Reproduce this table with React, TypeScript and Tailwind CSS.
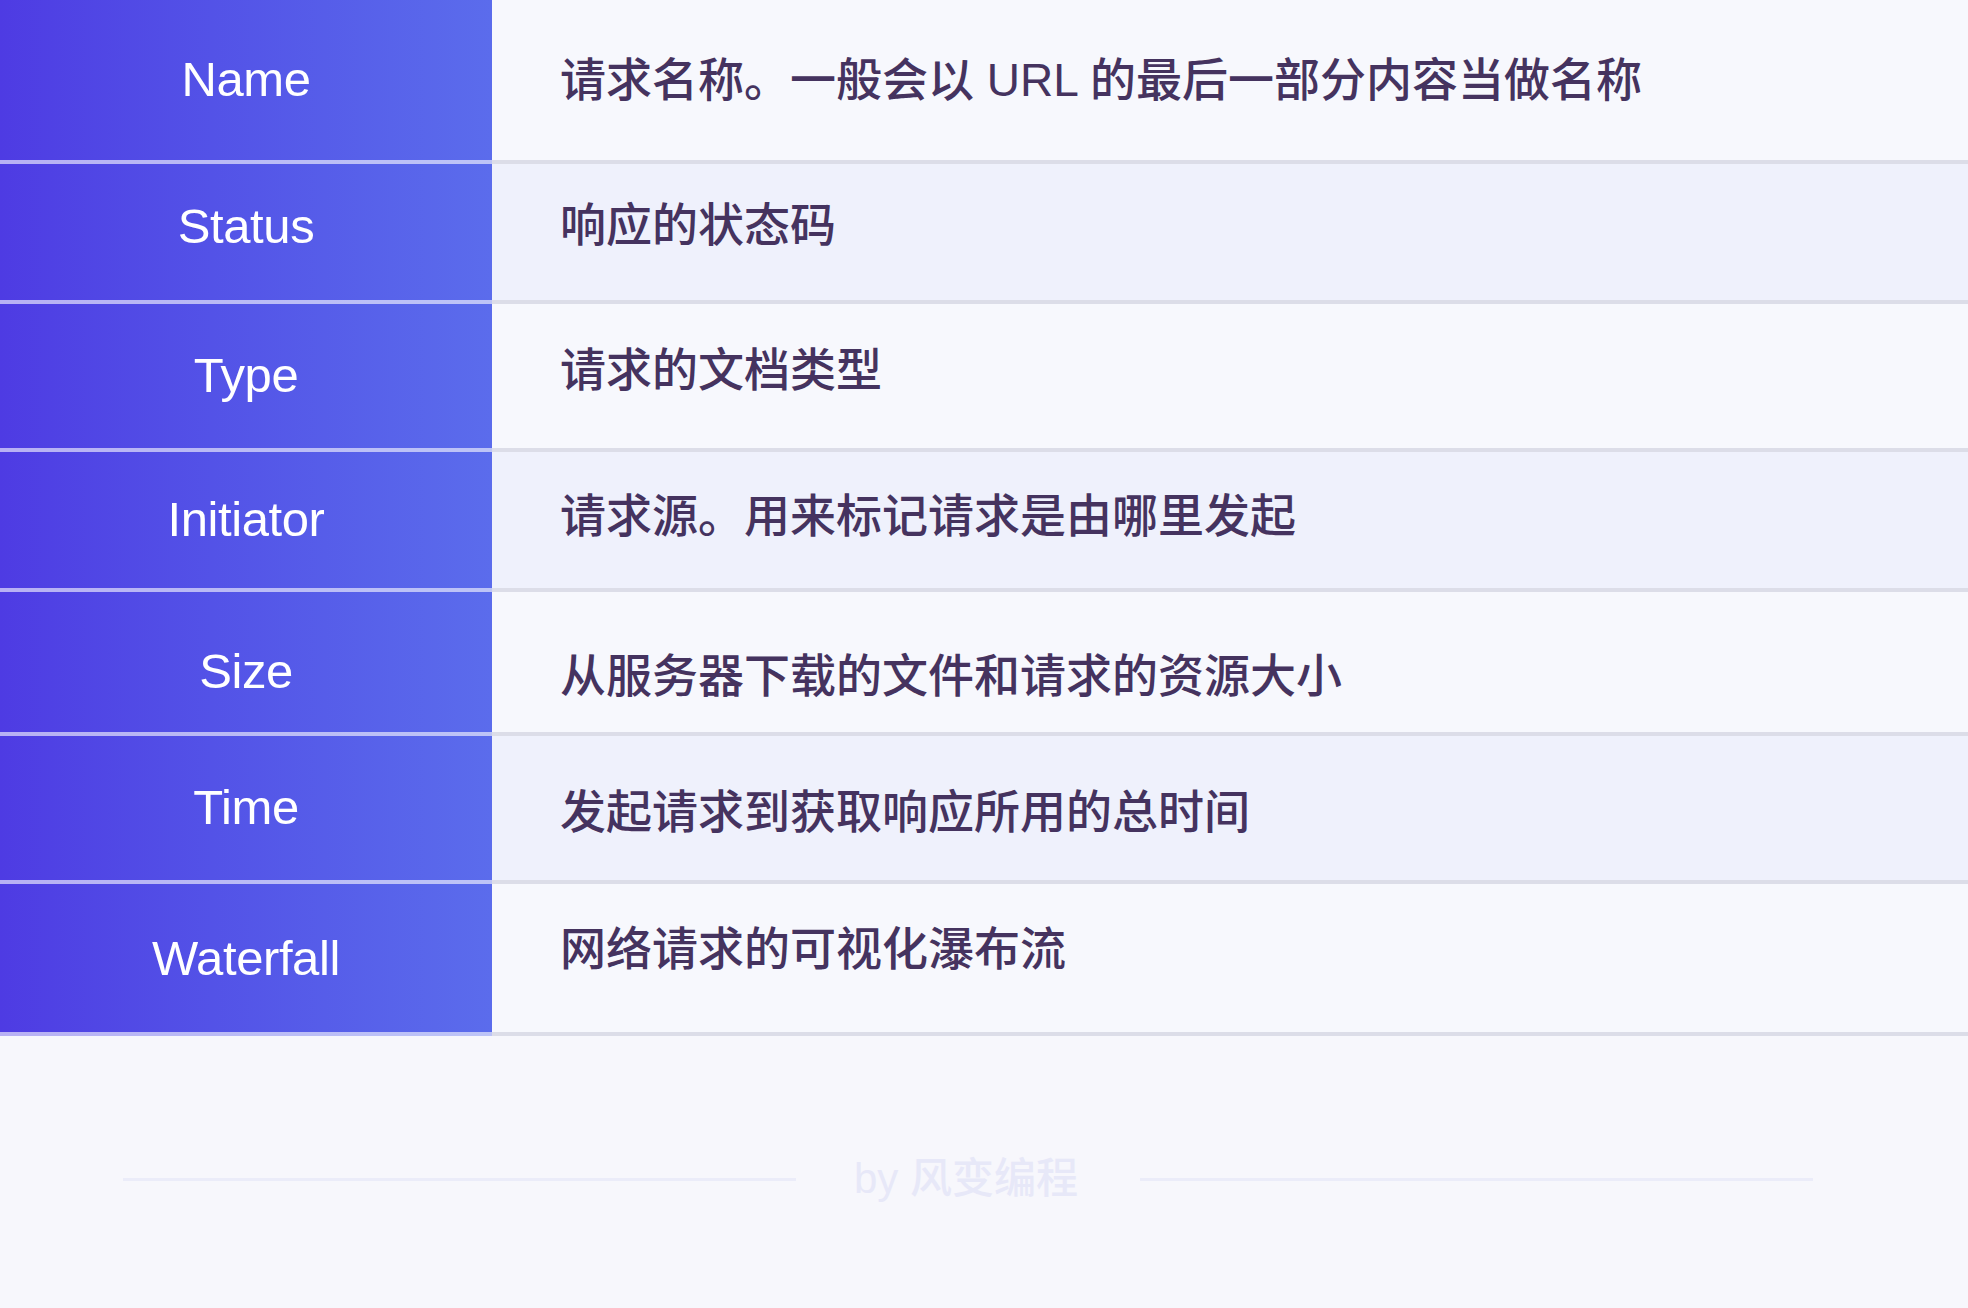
import React from "react";

type Row = { label: string; desc: string; h: string; alt: boolean; lp: string; dp: string };

const rows: Row[] = [
  { label: "Name", desc: "请求名称。一般会以 URL 的最后一部分内容当做名称", h: "h-[164px]", alt: false, lp: "pb-[2px]", dp: "" },
  { label: "Status", desc: "响应的状态码", h: "h-[140px]", alt: true, lp: "pb-[12px]", dp: "pb-[15px]" },
  { label: "Type", desc: "请求的文档类型", h: "h-[148px]", alt: false, lp: "pb-[2px]", dp: "pb-[12px]" },
  { label: "Initiator", desc: "请求源。用来标记请求是由哪里发起", h: "h-[140px]", alt: true, lp: "pb-[2px]", dp: "pb-[8px]" },
  { label: "Size", desc: "从服务器下载的文件和请求的资源大小", h: "h-[144px]", alt: false, lp: "pt-[18px]", dp: "pt-[27px]" },
  { label: "Time", desc: "发起请求到获取响应所用的总时间", h: "h-[148px]", alt: true, lp: "pb-[2px]", dp: "pt-[8px]" },
  { label: "Waterfall", desc: "网络请求的可视化瀑布流", h: "h-[152px]", alt: false, lp: "", dp: "pb-[18px]" },
];

export default function App() {
  return (
    <div
      className="w-[1968px] h-[1308px] bg-[#f7f7fc] flex flex-col overflow-hidden"
      style={{ fontFamily: '"Liberation Sans", "Noto Sans CJK SC", sans-serif' }}
    >
      <div className="flex flex-col">
        {rows.map((r) => (
          <div key={r.label} className={`flex ${r.h}`}>
            <div
              className={`w-[492px] shrink-0 flex items-center justify-center bg-linear-to-r from-[#4e3be3] to-[#5b6cec] border-b-4 border-white/60 ${r.lp}`}
            >
              <span className="text-white text-[49px] tracking-[-0.4px] leading-none">{r.label}</span>
            </div>
            <div
              className={`flex-1 flex items-center pl-[68px] border-b-4 border-[#dcdde8] ${
                r.alt ? "bg-[#eff1fc]" : "bg-[#f7f8fd]"
              } ${r.dp}`}
            >
              <span className="text-[#45335f] text-[46px] font-medium leading-none">{r.desc}</span>
            </div>
          </div>
        ))}
      </div>
      <div className="flex-1 flex items-center justify-center pt-[14px] pr-[32px]">
        <div className="flex items-center">
          <div className="w-[673px] h-[3px] bg-[#ebecf9]" />
          <span className="ml-[58px] mr-[62px] text-[42px] leading-none font-medium text-[#e7e8f8] whitespace-nowrap">
            by 风变编程
          </span>
          <div className="w-[673px] h-[3px] bg-[#ebecf9]" />
        </div>
      </div>
    </div>
  );
}
